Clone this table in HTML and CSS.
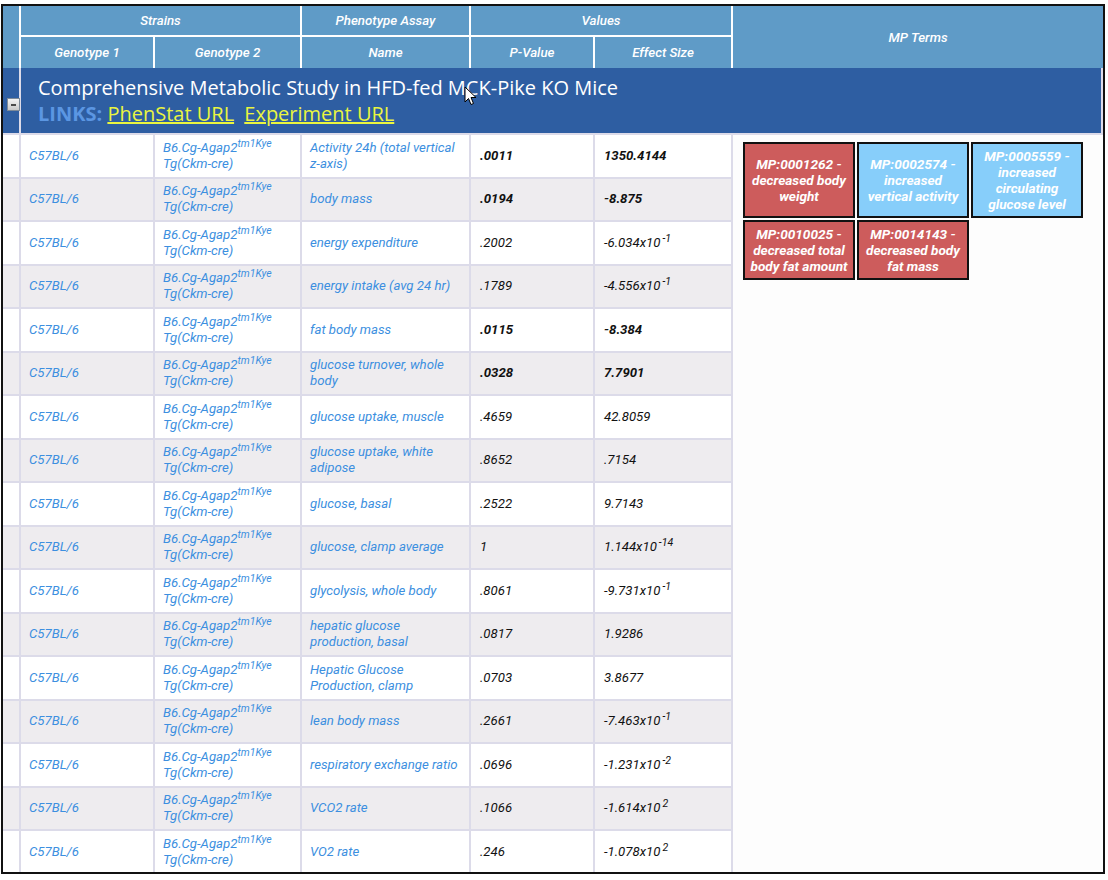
FILE: index.html
```html
<!DOCTYPE html>
<html>
<head>
<meta charset="utf-8">
<link rel="stylesheet" href="styles.css">
</head>
<body>
<div class="frame">
<table class="grid">
<colgroup>
<col class="c0"><col class="c1"><col class="c2"><col class="c3"><col class="c4"><col class="c5"><col class="c6">
</colgroup>
<thead>
<tr class="h1">
<th rowspan="2" class="hfirst"></th>
<th colspan="2">Strains</th>
<th>Phenotype Assay</th>
<th colspan="2">Values</th>
<th rowspan="2" class="hlast">MP Terms</th>
</tr>
<tr class="h2">
<th>Genotype 1</th>
<th>Genotype 2</th>
<th>Name</th>
<th>P-Value</th>
<th>Effect Size</th>
</tr>
</thead>
<tbody>
<tr class="band">
<td class="bandbtn"><span class="collapse"></span></td>
<td colspan="6" class="bandtext">
<div class="title">Comprehensive Metabolic Study in HFD-fed MCK-Pike KO Mice</div>
<div class="links"><span class="lbl">LINKS:</span> <a href="#">PhenStat URL</a> <a href="#">Experiment URL</a></div>
</td>
</tr>
<tr>
<td class="c0c"></td><td class="lk">C57BL/6</td><td class="lk">B6.Cg-Agap2<sup>tm1Kye</sup><br>Tg(Ckm-cre)</td><td class="lk">Activity 24h (total vertical z-axis)</td><td class="num b">.0011</td><td class="num b">1350.4144</td>
<td rowspan="17" class="mp">
<div class="terms">
<div class="term red">MP:0001262 - decreased body weight</div>
<div class="term blue">MP:0002574 - increased vertical activity</div>
<div class="term blue">MP:0005559 - increased circulating glucose level</div>
<div class="term red">MP:0010025 - decreased total body fat amount</div>
<div class="term red">MP:0014143 - decreased body fat mass</div>
</div>
</td>
</tr>
<tr class="alt"><td class="c0c"></td><td class="lk">C57BL/6</td><td class="lk">B6.Cg-Agap2<sup>tm1Kye</sup><br>Tg(Ckm-cre)</td><td class="lk">body mass</td><td class="num b">.0194</td><td class="num b">-8.875</td></tr>
<tr><td class="c0c"></td><td class="lk">C57BL/6</td><td class="lk">B6.Cg-Agap2<sup>tm1Kye</sup><br>Tg(Ckm-cre)</td><td class="lk">energy expenditure</td><td class="num">.2002</td><td class="num">-6.034x10<sup>-1</sup></td></tr>
<tr class="alt"><td class="c0c"></td><td class="lk">C57BL/6</td><td class="lk">B6.Cg-Agap2<sup>tm1Kye</sup><br>Tg(Ckm-cre)</td><td class="lk">energy intake (avg 24 hr)</td><td class="num">.1789</td><td class="num">-4.556x10<sup>-1</sup></td></tr>
<tr><td class="c0c"></td><td class="lk">C57BL/6</td><td class="lk">B6.Cg-Agap2<sup>tm1Kye</sup><br>Tg(Ckm-cre)</td><td class="lk">fat body mass</td><td class="num b">.0115</td><td class="num b">-8.384</td></tr>
<tr class="alt"><td class="c0c"></td><td class="lk">C57BL/6</td><td class="lk">B6.Cg-Agap2<sup>tm1Kye</sup><br>Tg(Ckm-cre)</td><td class="lk">glucose turnover, whole body</td><td class="num b">.0328</td><td class="num b">7.7901</td></tr>
<tr><td class="c0c"></td><td class="lk">C57BL/6</td><td class="lk">B6.Cg-Agap2<sup>tm1Kye</sup><br>Tg(Ckm-cre)</td><td class="lk">glucose uptake, muscle</td><td class="num">.4659</td><td class="num">42.8059</td></tr>
<tr class="alt"><td class="c0c"></td><td class="lk">C57BL/6</td><td class="lk">B6.Cg-Agap2<sup>tm1Kye</sup><br>Tg(Ckm-cre)</td><td class="lk">glucose uptake, white adipose</td><td class="num">.8652</td><td class="num">.7154</td></tr>
<tr><td class="c0c"></td><td class="lk">C57BL/6</td><td class="lk">B6.Cg-Agap2<sup>tm1Kye</sup><br>Tg(Ckm-cre)</td><td class="lk">glucose, basal</td><td class="num">.2522</td><td class="num">9.7143</td></tr>
<tr class="alt"><td class="c0c"></td><td class="lk">C57BL/6</td><td class="lk">B6.Cg-Agap2<sup>tm1Kye</sup><br>Tg(Ckm-cre)</td><td class="lk">glucose, clamp average</td><td class="num">1</td><td class="num">1.144x10<sup>-14</sup></td></tr>
<tr><td class="c0c"></td><td class="lk">C57BL/6</td><td class="lk">B6.Cg-Agap2<sup>tm1Kye</sup><br>Tg(Ckm-cre)</td><td class="lk">glycolysis, whole body</td><td class="num">.8061</td><td class="num">-9.731x10<sup>-1</sup></td></tr>
<tr class="alt"><td class="c0c"></td><td class="lk">C57BL/6</td><td class="lk">B6.Cg-Agap2<sup>tm1Kye</sup><br>Tg(Ckm-cre)</td><td class="lk">hepatic glucose production, basal</td><td class="num">.0817</td><td class="num">1.9286</td></tr>
<tr><td class="c0c"></td><td class="lk">C57BL/6</td><td class="lk">B6.Cg-Agap2<sup>tm1Kye</sup><br>Tg(Ckm-cre)</td><td class="lk">Hepatic Glucose Production, clamp</td><td class="num">.0703</td><td class="num">3.8677</td></tr>
<tr class="alt"><td class="c0c"></td><td class="lk">C57BL/6</td><td class="lk">B6.Cg-Agap2<sup>tm1Kye</sup><br>Tg(Ckm-cre)</td><td class="lk">lean body mass</td><td class="num">.2661</td><td class="num">-7.463x10<sup>-1</sup></td></tr>
<tr><td class="c0c"></td><td class="lk">C57BL/6</td><td class="lk">B6.Cg-Agap2<sup>tm1Kye</sup><br>Tg(Ckm-cre)</td><td class="lk">respiratory exchange ratio</td><td class="num">.0696</td><td class="num">-1.231x10<sup>-2</sup></td></tr>
<tr class="alt"><td class="c0c"></td><td class="lk">C57BL/6</td><td class="lk">B6.Cg-Agap2<sup>tm1Kye</sup><br>Tg(Ckm-cre)</td><td class="lk">VCO2 rate</td><td class="num">.1066</td><td class="num">-1.614x10<sup>2</sup></td></tr>
<tr class="last"><td class="c0c"></td><td class="lk">C57BL/6</td><td class="lk">B6.Cg-Agap2<sup>tm1Kye</sup><br>Tg(Ckm-cre)</td><td class="lk">VO2 rate</td><td class="num">.246</td><td class="num">-1.078x10<sup>2</sup></td></tr>
</tbody>
</table>
<svg class="cursor" width="13" height="20" viewBox="0 0 13 20"><path d="M1 1 L1 16 L4.5 12.5 L7 18.5 L9.5 17.5 L7 11.5 L12 11.5 Z" fill="#fff" stroke="#000" stroke-width="1" stroke-linejoin="round"/></svg>
</div>
</body>
</html>
```

FILE: styles.css
```css
html, body {
  margin: 0;
  padding: 0;
  background: #ffffff;
}

.frame {
  position: relative;
  margin: 4px 0 0 1px;
  width: 1100px;
  border: 2px solid #111111;
  background: #fdfdfd;
}

.grid {
  width: 1100px;
  table-layout: fixed;
  border-collapse: separate;
  border-spacing: 0;
  font-family: Roboto, "Liberation Sans", sans-serif;
  font-style: italic;
  font-size: 13.2px;
}

.c0 { width: 18px; }
.c1 { width: 134px; }
.c2 { width: 147px; }
.c3 { width: 169px; }
.c4 { width: 124px; }
.c5 { width: 138px; }
.c6 { width: 370px; }

th {
  background: #5f9bc7;
  color: #ffffff;
  font-weight: 500;
  font-size: 13.3px;
  text-align: center;
  padding: 0;
  border-right: 2px solid #ffffff;
  box-sizing: border-box;
}

.h1 th {
  height: 31px;
  border-bottom: 2px solid #ffffff;
}

.h2 th {
  height: 31px;
}

.h1 th.hfirst,
.h1 th.hlast {
  border-bottom: none;
}

th.hlast {
  border-right: none;
}

.band td {
  background: #2e5ea2;
  padding: 0;
}

.bandbtn {
  vertical-align: middle;
  text-align: left;
  padding: 7px 0 0 4px !important;
}

.collapse {
  display: block;
  position: relative;
  width: 13px;
  height: 13px;
  box-sizing: border-box;
  border: 1px solid #7d8a99;
  background: linear-gradient(#f4f4f4, #c9c9c9);
}

.collapse::after {
  content: "";
  position: absolute;
  left: 3px;
  top: 5px;
  width: 5px;
  height: 2px;
  background: #4a4a4a;
}

.bandtext {
  padding: 7px 0 6px 17px !important;
  font-family: "Open Sans", sans-serif;
  font-style: normal;
  height: 65px;
  box-sizing: border-box;
}

.title {
  color: #ffffff;
  font-size: 20px;
  line-height: 26px;
}

.links {
  font-size: 20px;
  line-height: 26px;
}

.lbl {
  color: #5b96e2;
  font-weight: 700;
}

.links a {
  color: #eaf53f;
  text-decoration: underline;
  margin-right: 5px;
}

tbody td {
  box-sizing: border-box;
  height: 43.5px;
  border-right: 2px solid #dcdbe9;
  border-bottom: 2px solid #dcdbe9;
  background: #ffffff;
  vertical-align: middle;
  padding: 0 8px;
  line-height: 16px;
  color: #111111;
}

tbody tr.alt td {
  background: #eeecef;
}

tbody tr.last td {
  border-bottom: none;
  height: 41px;
}

td.c0c {
  padding: 0;
}

td.lk {
  color: #3c8fe0;
}

td.num {
  padding-left: 9px;
}

td.b {
  font-weight: 700;
}

sup {
  font-size: 10.5px;
  line-height: 0;
  vertical-align: 5px;
}

td.num sup {
  font-size: 10.5px;
  margin-left: 2px;
}

td.mp {
  background: #fdfdfd;
  border-right: none;
  border-bottom: none;
  vertical-align: top;
  padding: 7px 0 0 10px;
}

.terms {
  display: flex;
  flex-wrap: wrap;
  gap: 2px;
  width: 344px;
}

.term {
  box-sizing: border-box;
  width: 112px;
  border: 2px solid #111111;
  padding: 4px 3px;
  display: flex;
  align-items: center;
  justify-content: center;
  text-align: center;
  color: #ffffff;
  font-weight: 700;
  font-size: 13.6px;
  line-height: 16px;
}

.red { background: #cd5c5c; }
.blue { background: #87cefa; }

.cursor {
  position: absolute;
  left: 461px;
  top: 80px;
}
```
